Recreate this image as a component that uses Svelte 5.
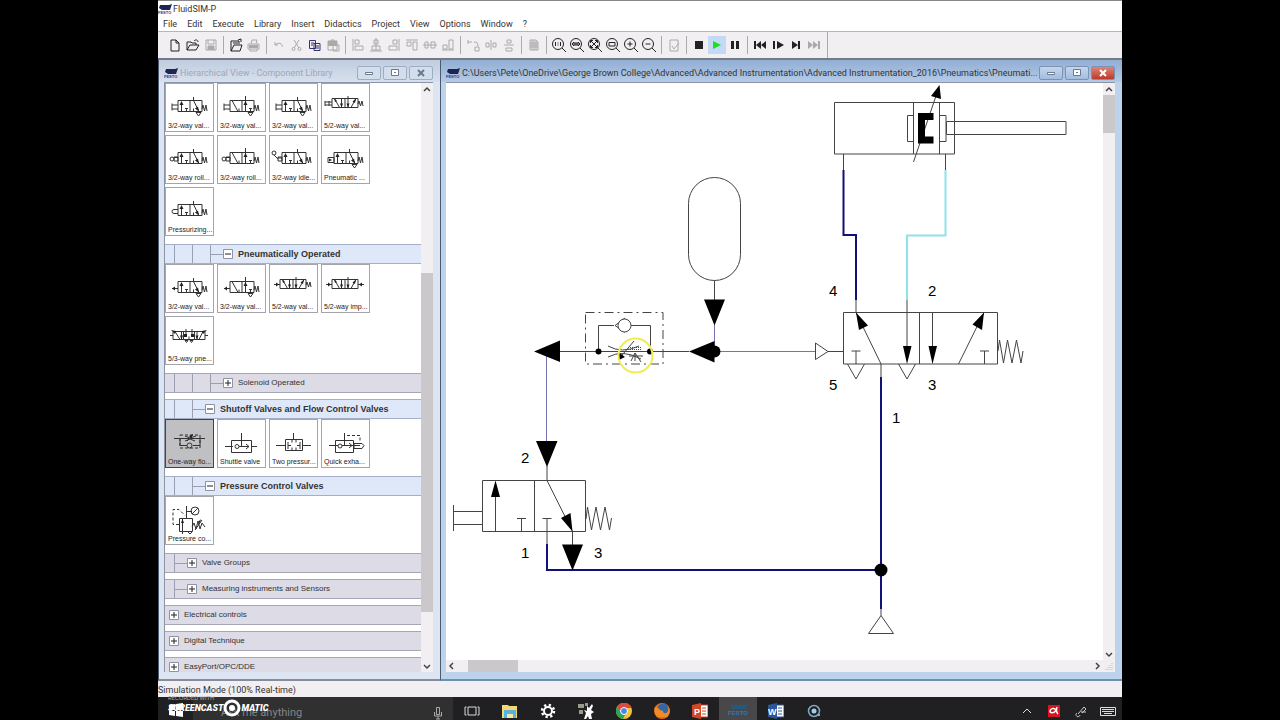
<script lang="ts">
	type Tile = { label: string; line: string; fill?: string; dash?: string; selected?: boolean };
	type Node = { label: string; depth: number; open?: boolean; tiles?: Tile[] };

	const menus = ['File', 'Edit', 'Execute', 'Library', 'Insert', 'Didactics', 'Project', 'View', 'Options', 'Window', '?'];

	// Valve symbols are put together from a body, an actuator on the left and a spring on the right
	const body = 'M13 16.500h24v11H13zM25 16.500v11';
	const closed = body + 'M16.500 27.500v-9M21.500 27.500v-3m-1.500 0h3M28.500 13v3.500l5.500 11M28.500 27.500v-3';
	const opened = body + 'M15 16.500l6 11M22 27.500v-3M28.500 12v15.500M33.500 27.500v-3m-1.500 0h3';
	const spring = 'M37 25l1-4 1.500 6 1.500-6 1 6';
	const vent = 'M31 28.500h5l-2.500 3.500z';
	const button = 'M7 19.500v7M7 21h6M7 25h6';
	const roller = 'M5 23a2 2 0 1 0 4 0a2 2 0 1 0-4 0M9 21.500h4M9 25h4v-4h-4z';
	const five = 'M11 14.500h26v9H11zM24 14.500v9M13.500 14.500l5 9M20.500 14.500v9M27 12v11.500M30 23.500l5-9';
	const headUp = 'M16.500 17l-2 4h4z';
	const headDiag = 'M34 27.500l-4-3 3-2z';
	const fiveHeads = 'M13 14l1 4 2-1zM20.500 23.500l-1.500-4h3zM27 23.500l-1.500-4h3zM35 14.500l-3.500 3 2.500 1.500z';

	const nodes: Node[] = [
		{
			label: 'Pneumatically Operated',
			depth: 3,
			open: true,
			tiles: [
				{ label: '3/2-way val...', line: closed + spring + 'M7 23.500h6' + vent, fill: headUp + headDiag + 'M7 23.500l3-2v4z' },
				{ label: '3/2-way val...', line: opened + spring + 'M7 23.500h6' + vent, fill: 'M28.500 17l-2 4h4zM7 23.500l3-2v4z' },
				{ label: '5/2-way val...', line: five + 'M37 20l1-3 1.500 5 1.500-5 1 5M5 19.500h6', fill: fiveHeads + 'M7 17.500l3 2-3 2z' },
				{ label: '5/2-way imp...', line: five + 'M37 19.500h6M5 19.500h6', fill: fiveHeads + 'M7 17.500l3 2-3 2zM41 17.500l-3 2 3 2z' },
				{
					label: '5/3-way pne...',
					line: 'M8 14.500h32v8H8zM18.500 14.500v8M29.500 14.500v8M10 14.500l5 8M16.500 14.500v8M21 12v5M24 22.500v-3M27 12v5M32 14.500v8M34 22.500l4-8M5 18.500h3M40 18.500h3M20 23.500h3l-1.500 2zM25 23.500h3l-1.500 2z',
					fill: 'M6 13l5 1-1 3zM16.500 22.500l-1.500-4h3zM32 22.500l-1.500-4h3zM42 13l-5 1 1 3zM19 17h3v3h-3zM26 17h3v3h-3z'
				}
			]
		},
		{ label: 'Solenoid Operated', depth: 3 },
		{
			label: 'Shutoff Valves and Flow Control Valves',
			depth: 2,
			open: true,
			tiles: [
				{
					label: 'One-way flo...',
					line: 'M9 18.500h31M15 18.500v7h7M28 25.500h7v-7M22 25.500a2.500 2.500 0 1 0 5 0a2.500 2.500 0 1 0-5 0M20 16l5 2 6-2M20 21l5-2 5 2M22 21l6-6',
					dash: 'M15 15h20v13H15z',
					fill: 'M28 14l-4 2 2 2z',
					selected: true
				},
				{ label: 'Shuttle valve', line: 'M8 26.500h8M34 26.500h6M14.500 20.500h20v12h-20zM24.500 13v14M18 26.500a2 2 0 1 0 4 0a2 2 0 1 0-4 0M29 24l3 2.500-3 2.500M22 26.500h10' },
				{ label: 'Two pressur...', line: 'M7 25.500h9M33 25.500h9M16.500 19.500h17v11h-17zM24.500 13v6M19 22v7M19 25.500h3M28 25.500h3M31 22v7M23 19.500v3M27 19.500v3M23 30.500v-3M27 30.500v-3' },
				{ label: 'Quick exha...', line: 'M8 25.500h9M14.500 20.500h18v12h-18zM23.500 13v13M17 26a2 2 0 1 0 4 0a2 2 0 1 0-4 0M21 25.500h18M28 23l3 2.500-3 2.500M33 23.500h8l2 2-2 3h-8z', dash: 'M26 15.500h13v7' }
			]
		},
		{
			label: 'Pressure Control Valves',
			depth: 2,
			open: true,
			tiles: [
				{
					label: 'Pressure co...',
					line: 'M14.500 21.500h13v13h-13zM21.500 9v12M17.500 38v-17M21 14.500h6M26 14a4 4 0 1 0 8 0a4 4 0 1 0-8 0M27 17l6-6M27 30l2-4 2 6 2-8 2 8 2-6 3 4M30 33l7-10M23 35l2 2 2-2',
					dash: 'M14 27.500H8v-15h6l6 6',
					fill: 'M17.500 22l-1.500 4h3zM36 22l-1 4-2-1z'
				}
			]
		},
		{ label: 'Valve Groups', depth: 1 },
		{ label: 'Measuring instruments and Sensors', depth: 1 },
		{ label: 'Electrical controls', depth: 0 },
		{ label: 'Digital Technique', depth: 0 },
		{ label: 'EasyPort/OPC/DDE', depth: 0 }
	];

	const manual: Tile[] = [
		{ label: '3/2-way val...', line: closed + spring + button + vent, fill: headUp + headDiag },
		{ label: '3/2-way val...', line: opened + spring + button + vent, fill: 'M28.500 17l-2 4h4z' },
		{ label: '3/2-way val...', line: closed + spring + button + vent, fill: headUp + headDiag },
		{ label: '5/2-way val...', line: five + 'M37 20l1-3 1.500 5 1.500-5 1 5M4 17v5M4 18h7M4 21h7M8 17v5', fill: fiveHeads },
		{ label: '3/2-way roll...', line: closed + spring + roller, fill: headUp + headDiag },
		{ label: '3/2-way roll...', line: opened + spring + roller, fill: 'M28.500 17l-2 4h4z' },
		{ label: '3/2-way idle...', line: closed + spring + 'M9 22h4M9 25h4v-4h-4zM9 23l-4-4M3 17a2 2 0 1 0 4 0a2 2 0 1 0-4 0', fill: headUp + headDiag },
		{ label: 'Pneumatic ...', line: closed + spring + 'M7 21.500h6v5H7z' + vent, fill: headUp + headDiag + 'M8 22.500l3 1.500-3 1.500z' },
		{ label: 'Pressurizing...', line: closed + spring + 'M13 21.500H9a2 2 0 0 0 0 4h4', fill: headUp + headDiag }
	];

	const lens = 'M1.500 7a5.500 5.500 0 1 0 11 0a5.500 5.500 0 1 0-11 0M11 11l4 4';

	type Tool = { name: string; d?: string; fill?: string; tone?: string };
	const toolGroups: Tool[][] = [
		[
			{ name: 'New', d: 'M4 3h5l3 3v8H4zM9 3v3h3' },
			{ name: 'Open', d: 'M2 13V5h4l1 1h4v2M2 13l3-5h9l-3 5zM9 4c2-2 4-1 4 1' },
			{ name: 'Save', d: 'M3 3h10v10H3zM5 3v4h6V3M5 13V9h6v4', fill: 'M5 9h6v4H5z', tone: 'off' }
		],
		[
			{ name: 'Page setup', d: 'M3 14V4h8v3M3 14l3-6h8l-2 6zM5 6h5M10 3l3-1v3' },
			{ name: 'Print', d: 'M5 7l1-4h5l-1 4M2 7h11v5H2zM4 12v2h7v-2', fill: 'M3 8h9v3H3z', tone: 'off' }
		],
		[
			{ name: 'Undo', d: 'M4 8c3-3 8-2 7 2M4 5v3h3', tone: 'off' },
			{ name: 'Cut', d: 'M5 3l5 8M10 3l-5 8M3 12a1.500 1.500 0 1 0 3 0a1.500 1.500 0 1 0-3 0M9 12a1.500 1.500 0 1 0 3 0a1.500 1.500 0 1 0-3 0', tone: 'off' },
			{ name: 'Copy', d: 'M2.500 3.500h6v8h-6zM7 6.500h6v7H7zM8 9h4M8 11h4M4 6h3M4 8h2', tone: 'navy' },
			{ name: 'Paste', d: 'M3 4h9v9H3zM6 3h3v2H6zM8 8h6v6H8z', fill: 'M3 4h9v5H3z', tone: 'off' }
		],
		[
			{ name: 'Align left', d: 'M3 2v12M5 3h4v4H5zM5 9h8v4H5z', tone: 'off' },
			{ name: 'Align centre', d: 'M6 3h4v4H6zM4 9h8v4H4zM2 14h12M8 1v13', tone: 'off' },
			{ name: 'Align right', d: 'M13 2v12M7 3h4v4H7zM3 9h8v4H3z', tone: 'off' },
			{ name: 'Align top', d: 'M2 3h12M3 5h4v4H3zM9 5h4v8H9z', tone: 'off' },
			{ name: 'Align middle', d: 'M1 8h14M3 5h3v6H3zM9 5h4v6H9z', tone: 'off' },
			{ name: 'Align bottom', d: 'M2 13h12M3 8h4v4H3zM9 3h4v9H9z', tone: 'off' }
		],
		[
			{ name: 'Rotate', d: 'M3 5h4M3 3v4M9 5c3 0 4 1 4 4M10 10h4v4h-4z', tone: 'off' },
			{ name: 'Mirror horizontally', d: 'M8 3v10M3 6h3v4H3zM10 6h3v4h-3z', tone: 'off' },
			{ name: 'Mirror vertically', d: 'M3 8h10M6 3h4v3H6zM5 11h6v3H5z', tone: 'off' }
		],
		[{ name: 'Grid', d: 'M4 3h6l2 2v8H4zM4 6h8M4 8h8M4 10h8M6 3v10M8 3v10M10 4v9', tone: 'off' }],
		[
			{ name: 'Actual size', d: lens + 'M4.500 5v4M9.500 5v4M7 5.500v1M7 7.500v1' },
			{ name: 'Previous zoom', d: lens + 'M3 7h8M5 5l-2 2 2 2M9 5l2 2-2 2M6 5v4M8 5v4' },
			{ name: 'Fit to window', d: lens + 'M3.500 3.500l7 7M10.500 3.500l-7 7M3.500 6V3.500H6M8 3.500h2.500V6M3.500 8v2.500H6M8 10.500h2.500V8' },
			{ name: 'Zoom window', d: lens + 'M4 5.500h6v3.500H4z' },
			{ name: 'Zoom in', d: lens + 'M4.500 7h5M7 4.500v5' },
			{ name: 'Zoom out', d: lens + 'M4.500 7h5' }
		],
		[{ name: 'Check drawing', d: 'M4 3h8v11H4zM6 9l2 3 5-6', tone: 'off' }],
		[
			{ name: 'Stop', fill: 'M4 4h8v8H4z' },
			{ name: 'Start', fill: 'M4 4l8 4-8 4z', tone: 'run' },
			{ name: 'Pause', fill: 'M4 4h3v8H4zM9 4h3v8H9z' }
		],
		[
			{ name: 'Reset', fill: 'M2 4h2v8H2zM9 4v8L4 8zM14 4v8L9 8z' },
			{ name: 'Single step', fill: 'M3 4h2v8H3zM7 4l7 4-7 4z' },
			{ name: 'Next state', fill: 'M4 4l6 4-6 4zM10 4h2v8h-2z' },
			{ name: 'Next topic', fill: 'M2 4l5 4-5 4zM7 4l5 4-5 4zM12 4h2v8h-2z', tone: 'off' }
		]
	];

	const captions = ['Minimize', 'Maximize', 'Close'];
</script>

{#snippet festo()}
	<svg class="festo" viewBox="0 0 14 12" aria-hidden="true">
		<path d="M2 2h9l3-1-2 6H4L1 5z" fill="#1d2552" />
		<text x="0" y="11">FESTO</text>
	</svg>
{/snippet}

{#snippet windowButtons()}
	<div class="win-buttons">
		{#each captions as caption}
			<button class={caption.toLowerCase()} aria-label={caption}>
				<svg viewBox="0 0 12 10" width="12" height="10">
					{#if caption === 'Minimize'}
						<path d="M2.500 4.500h7v2h-7z" />
					{:else if caption === 'Maximize'}
						<path d="M2.500 1.500h7v6h-7zM5 4.500h2" />
					{:else}
						<path d="M3 2l6 6M9 2l-6 6" class="cross" />
					{/if}
				</svg>
			</button>
		{/each}
	</div>
{/snippet}

{#snippet arrow(name: string, d: string)}
	<button class="arrow" aria-label={name}>
		<svg viewBox="0 0 12 12" width="12" height="12"><path {d} /></svg>
	</button>
{/snippet}

{#snippet tileGrid(tiles: Tile[])}
	<div class="tiles">
		{#each tiles as tile}
			<button class="tile" class:selected={tile.selected}>
				<svg viewBox="1 0 47 37" width="47" height="37" aria-hidden="true">
					<path d={tile.line} />
					{#if tile.dash}<path d={tile.dash} stroke-dasharray="3 2" />{/if}
					{#if tile.fill}<path d={tile.fill} class="solid" />{/if}
				</svg>
				<span>{tile.label}</span>
			</button>
		{/each}
	</div>
{/snippet}

<div class="app">
	<header class="title">
		{@render festo()}
		<span>FluidSIM-P</span>
	</header>
	<nav class="menu">
		{#each menus as item}
			<button>{item}</button>
		{/each}
	</nav>
	<div class="toolbar">
		{#each toolGroups as group}
			<div class="group">
				{#each group as tool}
					<button class={tool.tone ?? ''} aria-label={tool.name}>
						<svg viewBox="0 0 16 16" width="16" height="16">
							{#if tool.d}<path d={tool.d} class="stroke" />{/if}
							{#if tool.fill}<path d={tool.fill} class="fill" />{/if}
						</svg>
					</button>
				{/each}
			</div>
		{/each}
		<div class="toolbar-end"></div>
	</div>

	<main>
		<section class="window library">
			<div class="caption">
				{@render festo()}
				<h2>Hierarchical View - Component Library</h2>
				{@render windowButtons()}
			</div>
			<div class="pane">
				<div class="tree">
					{@render tileGrid(manual)}
					{#each nodes as node}
						<button class="node" class:open={node.open} aria-expanded={!!node.open}>
							{#each { length: node.depth } as _}
								<span class="guide"></span>
							{/each}
							<svg class="toggle" viewBox="0 0 10 10" width="10" height="10">
								<path d="M.5 .5h9v9h-9z" />
								<path d={node.open ? 'M2 5h6' : 'M2 5h6M5 2v6'} class="sign" />
							</svg>
							<span>{node.label}</span>
						</button>
						{#if node.tiles}{@render tileGrid(node.tiles)}{/if}
					{/each}
				</div>
				<div class="vscroll">
					{@render arrow('Scroll up', 'M3 8l3-3 3 3')}
					<div class="track"><div class="thumb"></div></div>
					{@render arrow('Scroll down', 'M3 5l3 3 3-3')}
				</div>
			</div>
		</section>

		<section class="window circuit">
			<div class="caption">
				{@render festo()}
				<h2>C:\Users\Pete\OneDrive\George Brown College\Advanced\Advanced Instrumentation\Advanced Instrumentation_2016\Pneumatics\Pneumati...</h2>
				{@render windowButtons()}
			</div>
			<div class="pane">
				<div class="canvas">
					<svg viewBox="446 83 657 577" width="657" height="577" role="img" aria-label="Pneumatic circuit">
						<!-- double acting cylinder -->
						<g class="part">
							<path d="M834.500 102.500h120v51.500h-120zM913.500 102.500v51.500M939.500 102.500v51.500" />
							<path d="M913.500 115.500h-6v26h6M939.500 115.500h6.500v26h-6.500" />
							<path d="M946.500 121.500h119.500v13H946.500z" class="paper" />
							<path d="M954.500 121v14M913.500 162L937 93M843.500 154v16M945.500 154v16" />
						</g>
						<path d="M918 113h15.500v7H925v16.500h8.500v7H918zM939.500 85l-8.500 11 10 3z" />

						<!-- pressure lines -->
						<path class="pressure" d="M843.500 170v65h12.500v65M881 377v232M547 544v26h334" />
						<path class="exhaust" d="M945.500 170v65.500H907V300" />
						<path class="pilot" d="M714.500 325v26.500H815M546.500 352v90" />

						<!-- 5/2-way valve -->
						<g class="part">
							<path d="M843.500 312.500h154v51.500h-154zM919.500 312.500v51.500" />
							<path d="M856 300v12.500L881 364v13M907 300v60M932.500 312.500v50M958.500 364L984 312.500" />
							<path d="M856 364v-13m-4.500 0h9M984.500 364v-13m-4.500 0h9" />
							<path d="M847.500 364l8.500 15 8.500-15M898.500 364l8.500 15 8.500-15" />
							<path d="M998 351l1.500-11 4 23 4-23 4.500 23 4.500-23 4.500 23 2-12" />
							<path d="M843 351.500h-15L815.500 343v16.500l12.500-8" />
						</g>
						<path d="M856 312.500l3 17.500 9-4.500zM907 364l-4-18h8.500zM932.500 364l-4-18h8.500zM984 312.500l-11.500 12 9.500 5.500z" />

						<!-- reservoir -->
						<g class="part">
							<rect x="688.500" y="177.500" width="52" height="103" rx="26" />
							<path d="M714.500 280.500V300M560 351.500h129" />
						</g>
						<path d="M704 299.500h21l-10.500 26zM689 351.500l25.500-10.500v21.500zM534 351.500l26-11v21.500z" />
						<circle cx="714.500" cy="351.500" r="6" />

						<!-- one-way flow control valve -->
						<g class="part">
							<path d="M585.500 312.500H663V364h-77.500z" stroke-dasharray="9 4 2 4" />
							<path d="M598.500 351.500v-26H614M631 325.500h19.500v26M625 318l-10 7.500 10 7" />
							<circle cx="624.500" cy="325.500" r="6.500" class="paper" />
							<path d="M608 346q14 8 31 0M608 357q15-8 33 2M618 360l16-19" />
							<path d="M628 347.500h14M628 349.500h14" stroke-dasharray="1 1" />
							<path d="M631 361l4-8 6 9M629 356h14M635 353v8" />
						</g>
						<path d="M619 352.500l6 4.500-6 3z" />
						<circle cx="598.500" cy="351.500" r="3" />
						<circle cx="650" cy="351.500" r="3" />
						<circle class="pointer" cx="635.500" cy="355.500" r="17" />

						<!-- 3/2-way valve with push button -->
						<g class="part">
							<path d="M482.500 480.500h103v51h-103zM534.500 480.500v51" />
							<path d="M453.500 505v26M453.500 511.500h29M453.500 524.500h29" />
							<path d="M495.500 531V490M521.500 531v-12.500m-4.500 0h9M547 544v-25.500m-4.500 0h9" />
							<path d="M547 466v14.500l25.500 51V546" />
							<path d="M586 519l1.500-12 4 23 4.500-23 4.500 23 4.500-23 4.500 23 2-12" />
						</g>
						<path d="M536 441h21.500L547 467zM495.500 480.500L491 497h9zM572.500 531.500L561 518l9.500-5zM562 544.500h21l-10.500 26z" />

						<!-- compressed air supply -->
						<circle cx="881" cy="570" r="6.500" />
						<path class="part" d="M881 609v6.500l-12.500 18h25L881 615.500" />

						<g class="port">
							<text x="829" y="296">4</text>
							<text x="928" y="296">2</text>
							<text x="829" y="390">5</text>
							<text x="928" y="390">3</text>
							<text x="892" y="423">1</text>
							<text x="521" y="463">2</text>
							<text x="521" y="558">1</text>
							<text x="594" y="558">3</text>
						</g>
					</svg>
				</div>
				<div class="vscroll">
					{@render arrow('Scroll up', 'M3 8l3-3 3 3')}
					<div class="track"><div class="thumb"></div></div>
					{@render arrow('Scroll down', 'M3 5l3 3 3-3')}
				</div>
				<div class="hscroll">
					{@render arrow('Scroll left', 'M7 3L4 6l3 3')}
					<div class="track"><div class="thumb"></div></div>
					{@render arrow('Scroll right', 'M5 3l3 3-3 3')}
				</div>
				<svg class="grip" viewBox="0 0 12 12" width="12" height="12">
					<path d="M9 3v8M7 5v6M5 7v4M3 9v2" />
				</svg>
			</div>
		</section>
	</main>

	<div class="status">Simulation Mode (100% Real-time)</div>

	<footer class="taskbar">
		<button class="start" aria-label="Start">
			<svg viewBox="0 0 14 14" width="14" height="14">
				<path d="M0 2l6-1v6H0zM7 1l7-1v7H7zM0 8h6v5l-6-1zM7 8h7v6l-7-1z" fill="#fff" />
			</svg>
		</button>
		<div class="search">
			<input type="text" placeholder="Ask me anything" aria-label="Ask me anything" />
			<svg viewBox="0 0 10 14" width="10" height="14">
				<path d="M3.500 1.500h3v7h-3zM1.500 6v4h7V6M5 10v3M3 13h4" fill="none" stroke="#aaa" />
			</svg>
		</div>
		<div class="tasks">
			<button aria-label="Task View">
				<svg viewBox="0 0 16 16"><path d="M4 4h8v8H4zM2.500 4H1v8h1.500M13.500 4H15v8h-1.500" fill="none" stroke="#ddd" /></svg>
			</button>
			<button aria-label="File Explorer">
				<svg viewBox="0 0 16 16">
					<path d="M0 2h6l1 1h8v12H0z" fill="#f5d774" />
					<path d="M2 7h12v8H2z" fill="#58b2dd" />
					<path d="M5 11h6v4H5z" fill="#f8e8a6" />
				</svg>
			</button>
			<button aria-label="Settings">
				<svg viewBox="0 0 16 16">
					<circle cx="8" cy="8" r="4" fill="none" stroke="#fff" stroke-width="2" />
					<circle cx="8" cy="8" r="6" fill="none" stroke="#fff" stroke-width="2.500" stroke-dasharray="2.300 2.410" />
				</svg>
			</button>
			<button aria-label="Tools">
				<svg viewBox="0 0 16 16">
					<path d="M0 1h6v4H0zM7 0h3v3H7zM1 7h4v4H1z" fill="#9b9b8c" />
					<path d="M9 3l2 2 3-4 1 2-2 4 3 2-3 2 1 5h-3l-1-3-2 3H6l2-6-2-3 3 1z" fill="#fff" />
				</svg>
			</button>
			<button aria-label="Chrome">
				<svg viewBox="0 0 16 16">
					<circle cx="8" cy="8" r="8" fill="#f3c530" />
					<path d="M1 4a8 8 0 0 1 14.500 1H8L5 10z" fill="#dd4b3e" />
					<path d="M1 4l4.500 6L9 12l-2 4A8 8 0 0 1 1 4z" fill="#2da35a" />
					<circle cx="8" cy="8" r="3.500" fill="#4b87e8" stroke="#fff" />
				</svg>
			</button>
			<button aria-label="Firefox">
				<svg viewBox="0 0 16 16">
					<circle cx="8" cy="8" r="8" fill="#e66b1d" />
					<circle cx="9" cy="6" r="5.500" fill="#3266a8" />
					<path d="M1 4c2 0 4 1 5 3l3 1c0 3 4 3 5 0 1-2 0-5-1-6 4 4 3 9 0 12H4C0 11 0 7 1 4z" fill="#f18b25" />
				</svg>
			</button>
			<button aria-label="PowerPoint">
				<svg viewBox="0 0 16 16">
					<path d="M8 2h8v12H8z" fill="#fff" stroke="#d24726" />
					<path d="M10 5h4M10 8h4M10 11h4" stroke="#d24726" />
					<path d="M0 2l9-2v16l-9-2z" fill="#d24726" />
					<text x="2" y="12">P</text>
				</svg>
			</button>
			<button class="active" aria-label="FluidSIM">
				<svg class="wide" viewBox="0 0 22 16">
					<path d="M3 2h14l4-1-3 5H6z" fill="#215a80" />
					<text x="1" y="12" class="brand">FESTO</text>
				</svg>
			</button>
			<button aria-label="Word">
				<svg viewBox="0 0 16 16">
					<path d="M8 2h8v12H8z" fill="#fff" stroke="#2b579a" />
					<path d="M10 5h4M10 8h4M10 11h4" stroke="#2b579a" />
					<path d="M0 2l9-2v16l-9-2z" fill="#2b579a" />
					<text x="0" y="12">W</text>
				</svg>
			</button>
			<button aria-label="Recorder">
				<svg viewBox="0 0 16 16">
					<circle cx="8" cy="8" r="5.500" fill="none" stroke="#7fa9c9" stroke-width="1.500" />
					<circle cx="8" cy="8" r="2.500" fill="#a9cbe2" />
					<path d="M11 12h3" stroke="#7fa9c9" stroke-width="2" />
				</svg>
			</button>
		</div>
		<div class="tray">
			<button aria-label="Show hidden icons">
				<svg viewBox="0 0 16 16"><path d="M4 10l4-4 4 4" fill="none" stroke="#ddd" /></svg>
			</button>
			<button aria-label="Antivirus">
				<svg viewBox="0 0 16 16">
					<path d="M2 2h12v12H2z" fill="#d8121f" />
					<path d="M11 4c-1 3-1 5 1 7M10 7c-2-3-6-1-6 1s4 3 6-1" fill="none" stroke="#fff" stroke-width="1.500" />
				</svg>
			</button>
			<button aria-label="Ink workspace">
				<svg viewBox="0 0 16 16"><path d="M5 11l6-7 2 2-4 4M4 10a2 2 0 1 0 3 2M8 9h5" fill="none" stroke="#ccc" /></svg>
			</button>
			<button aria-label="Touch keyboard">
				<svg viewBox="0 0 16 16"><path d="M.5 4.500h15v8H.5zM2 6.500h12M2 8.500h12M4 10.500h8" fill="none" stroke="#ddd" /></svg>
			</button>
		</div>
		<div class="watermark">
			<small>RECORDED WITH</small>
			<strong>
				<span>SCREENCAST</span>
				<svg viewBox="0 0 18 18" width="18" height="18">
					<circle cx="9" cy="9" r="7" fill="none" stroke="#fff" stroke-width="3" />
					<circle cx="9" cy="9" r="3" fill="#fff" />
				</svg>
				<span>MATIC</span>
			</strong>
		</div>
	</footer>
</div>

<style>
	:global(body) {
		background: #000;
	}

	.app {
		display: flex;
		flex-direction: column;
		height: 100vh;
		margin: 0 158px;
		overflow: hidden;
		background: #fff;
		color: #333;
		font: 9px/12px Roboto, 'Noto Sans', sans-serif;
	}

	button {
		padding: 0;
		border: 0;
		background: none;
		color: inherit;
		font: inherit;
	}

	svg {
		display: block;
		flex: none;
	}

	.festo {
		width: 14px;
		height: 12px;
	}

	.festo text {
		fill: #2a3590;
		font: bold 4px 'Liberation Sans', sans-serif;
	}

	.title {
		display: flex;
		align-items: center;
		gap: 1px;
		height: 15px;
		border-top: 1px solid #888;
	}

	.menu {
		display: flex;
		height: 15px;
		border-bottom: 1px solid #b5b5b5;
	}

	.menu button {
		padding: 0 5px;
	}

	.toolbar {
		display: flex;
		align-items: center;
		height: 26px;
		padding-left: 8px;
		background: #f2eff2;
	}

	.group {
		display: flex;
	}

	.group + .group {
		margin-left: 3px;
		padding-left: 3px;
		border-left: 1px solid #aaa;
	}

	.toolbar-end {
		align-self: stretch;
		margin-left: 4px;
		border-left: 1px solid #aaa;
	}

	.toolbar button {
		width: 18px;
		height: 18px;
		padding: 1px;
		color: #222;
	}

	.toolbar .off {
		color: #aaa;
	}

	.toolbar .navy {
		color: #33336f;
	}

	.toolbar .run {
		background: #c3d9f5;
		color: #1de01d;
	}

	.stroke {
		fill: none;
		stroke: currentColor;
	}

	.fill {
		fill: currentColor;
	}

	main {
		display: grid;
		grid-template-columns: 282px 1fr;
		flex: 1;
		min-height: 0;
		border-top: 2px solid #747a86;
	}

	.window {
		display: flex;
		flex-direction: column;
		min-width: 0;
		min-height: 0;
		padding: 0 7px 7px 5px;
		border-left: 1px solid #4b5a70;
		border-bottom: 2px solid #6a91ad;
		background: #bdd3ec;
	}

	.library {
		border-bottom-color: #868c9c;
		background: #dde5f3;
	}

	.caption {
		display: flex;
		align-items: center;
		gap: 2px;
		box-sizing: border-box;
		height: 22px;
		margin: 0 -7px 0 -5px;
		padding: 3px 7px 0 5px;
		background: linear-gradient(#93aed4, #b4cae7);
	}

	.library .caption {
		background: linear-gradient(#c0cddf, #d7e0ee);
		color: #a0a8b6;
	}

	h2 {
		flex: 1;
		min-width: 0;
		margin: 0;
		overflow: hidden;
		font: inherit;
		white-space: nowrap;
	}

	.win-buttons {
		display: flex;
		gap: 2px;
	}

	.win-buttons button {
		display: grid;
		place-items: center;
		width: 24px;
		height: 14px;
		border: 1px solid #7c92b4;
		border-radius: 2px;
		background: linear-gradient(#c5d6ec, #a3bddf);
	}

	.library .win-buttons button {
		border-color: #9fadc2;
		background: #d3deed;
	}

	.circuit .win-buttons .close {
		background: linear-gradient(#dc8775, #c0392a);
	}

	.win-buttons path {
		fill: #fff;
		stroke: #6b788e;
	}

	.win-buttons .cross {
		stroke-width: 2;
	}

	.circuit .win-buttons .cross {
		stroke: #fff;
	}

	.pane {
		display: grid;
		grid-template-columns: 1fr 12px;
		flex: 1;
		min-height: 0;
		border-top: 1px solid #8a96a8;
		background: #fff;
	}

	.circuit .pane {
		grid-template-rows: 1fr 12px;
	}

	.tree {
		overflow: hidden;
		border-left: 1px solid #8a96a8;
	}

	.tiles {
		display: grid;
		grid-template-columns: repeat(4, 49px);
		gap: 3px;
		padding-bottom: 8px;
	}

	.tile {
		height: 49px;
		overflow: hidden;
		border: 1px solid #a5a5a9;
		background: #fff;
		font: 7px/10px 'Liberation Sans', sans-serif;
		text-align: left;
		white-space: nowrap;
		color: #222;
	}

	.tile span {
		padding-left: 2px;
	}

	.tile.selected {
		border-color: #444;
		background: #c0bfc1;
	}

	.tile path {
		fill: none;
		stroke: #333;
	}

	.tile .solid {
		fill: #222;
		stroke: none;
	}

	.node {
		display: flex;
		align-items: center;
		width: 100%;
		height: 20px;
		margin-bottom: 6px;
		padding-left: 9px;
		border: 1px solid #a5a8b4;
		border-width: 1px 0;
		background: #dcdbe6;
		font: 8px/12px 'Liberation Sans', sans-serif;
	}

	.node.open {
		margin-bottom: 0;
		border-color: #a4b0c8;
		background: #dfe8f9;
		font-size: 9px;
		font-weight: bold;
	}

	.guide {
		display: flex;
		align-items: center;
		align-self: stretch;
		box-sizing: border-box;
		width: 18px;
		border-left: 1px solid #99a0b2;
	}

	.guide:nth-last-of-type(2)::after {
		content: '';
		flex: 1;
		height: 1px;
		background: #99a0b2;
	}

	.toggle {
		margin: 0 5px 0 -5px;
	}

	.toggle path {
		fill: #fff;
		stroke: #8d93a5;
	}

	.toggle .sign {
		stroke: #222;
	}

	.vscroll,
	.hscroll {
		display: flex;
		background: #f2eff3;
	}

	.vscroll {
		flex-direction: column;
	}

	.arrow {
		width: 12px;
		height: 12px;
	}

	.arrow path {
		fill: none;
		stroke: #444;
		stroke-width: 1.5;
	}

	.track {
		display: flex;
		flex: 1;
	}

	.vscroll .track {
		flex-direction: column;
	}

	.thumb {
		background: #cbc8cb;
	}

	.library .thumb {
		height: 60%;
		margin-top: 178px;
	}

	.circuit .vscroll .thumb {
		height: 38px;
	}

	.hscroll .thumb {
		width: 50px;
		margin-left: 10px;
	}

	.canvas {
		min-width: 0;
		min-height: 0;
		overflow: hidden;
	}

	.part {
		fill: none;
		stroke: #444;
	}

	.paper {
		fill: #fff;
	}

	.pressure {
		fill: none;
		stroke: #11117a;
		stroke-width: 2;
	}

	.exhaust {
		fill: none;
		stroke: #8ee3ea;
		stroke-width: 2;
	}

	.pilot {
		fill: none;
		stroke: #7474ae;
	}

	.pointer {
		fill: none;
		stroke: #f1ec55;
		stroke-width: 2;
	}

	.port {
		font: 15px 'Liberation Sans', sans-serif;
	}

	.grip {
		background: #f2eff3;
	}

	.grip path {
		stroke: #bbb;
		stroke-dasharray: 1 1;
	}

	.status {
		height: 16px;
		background: #f2eff2;
		line-height: 18px;
	}

	.taskbar {
		position: relative;
		display: flex;
		height: 23px;
		background: #201f21;
	}

	.taskbar button {
		display: flex;
		justify-content: center;
		padding-top: 6px;
	}

	.taskbar .start {
		width: 35px;
	}

	.search {
		display: flex;
		width: 260px;
		background: #303031;
		align-items: flex-end;
	}

	.search input {
		flex: 1;
		min-width: 0;
		height: 16px;
		padding: 0 0 0 28px;
		border: 0;
		background: none;
		font: 11px/14px Roboto, 'Noto Sans', sans-serif;
	}

	.search input::placeholder {
		color: #858585;
		opacity: 1;
	}

	.search svg {
		margin-right: 10px;
	}

	.tasks {
		display: flex;
	}

	.tasks button {
		width: 38px;
	}

	.tasks svg,
	.tray svg {
		width: 16px;
		height: 16px;
	}

	.tasks .wide {
		width: 22px;
	}

	.tasks text {
		fill: #fff;
		font: bold 9px 'Liberation Sans', sans-serif;
	}

	.tasks .brand {
		fill: #2b7bb0;
		font-size: 6px;
	}

	.tasks .active {
		background: #48484a;
	}

	.tray {
		display: flex;
		margin-left: auto;
		padding-right: 1px;
	}

	.tray button {
		width: 27px;
	}

	/* Recorder mark, lies over the start button and the search box */
	.watermark {
		position: absolute;
		bottom: 5px;
		left: 10px;
		color: #fff;
	}

	.watermark small {
		display: block;
		font-size: 6px;
		line-height: 6px;
		color: #aaa;
	}

	.watermark strong {
		display: flex;
		align-items: center;
		height: 14px;
		font: italic 900 9px/14px Roboto, sans-serif;
	}
</style>
